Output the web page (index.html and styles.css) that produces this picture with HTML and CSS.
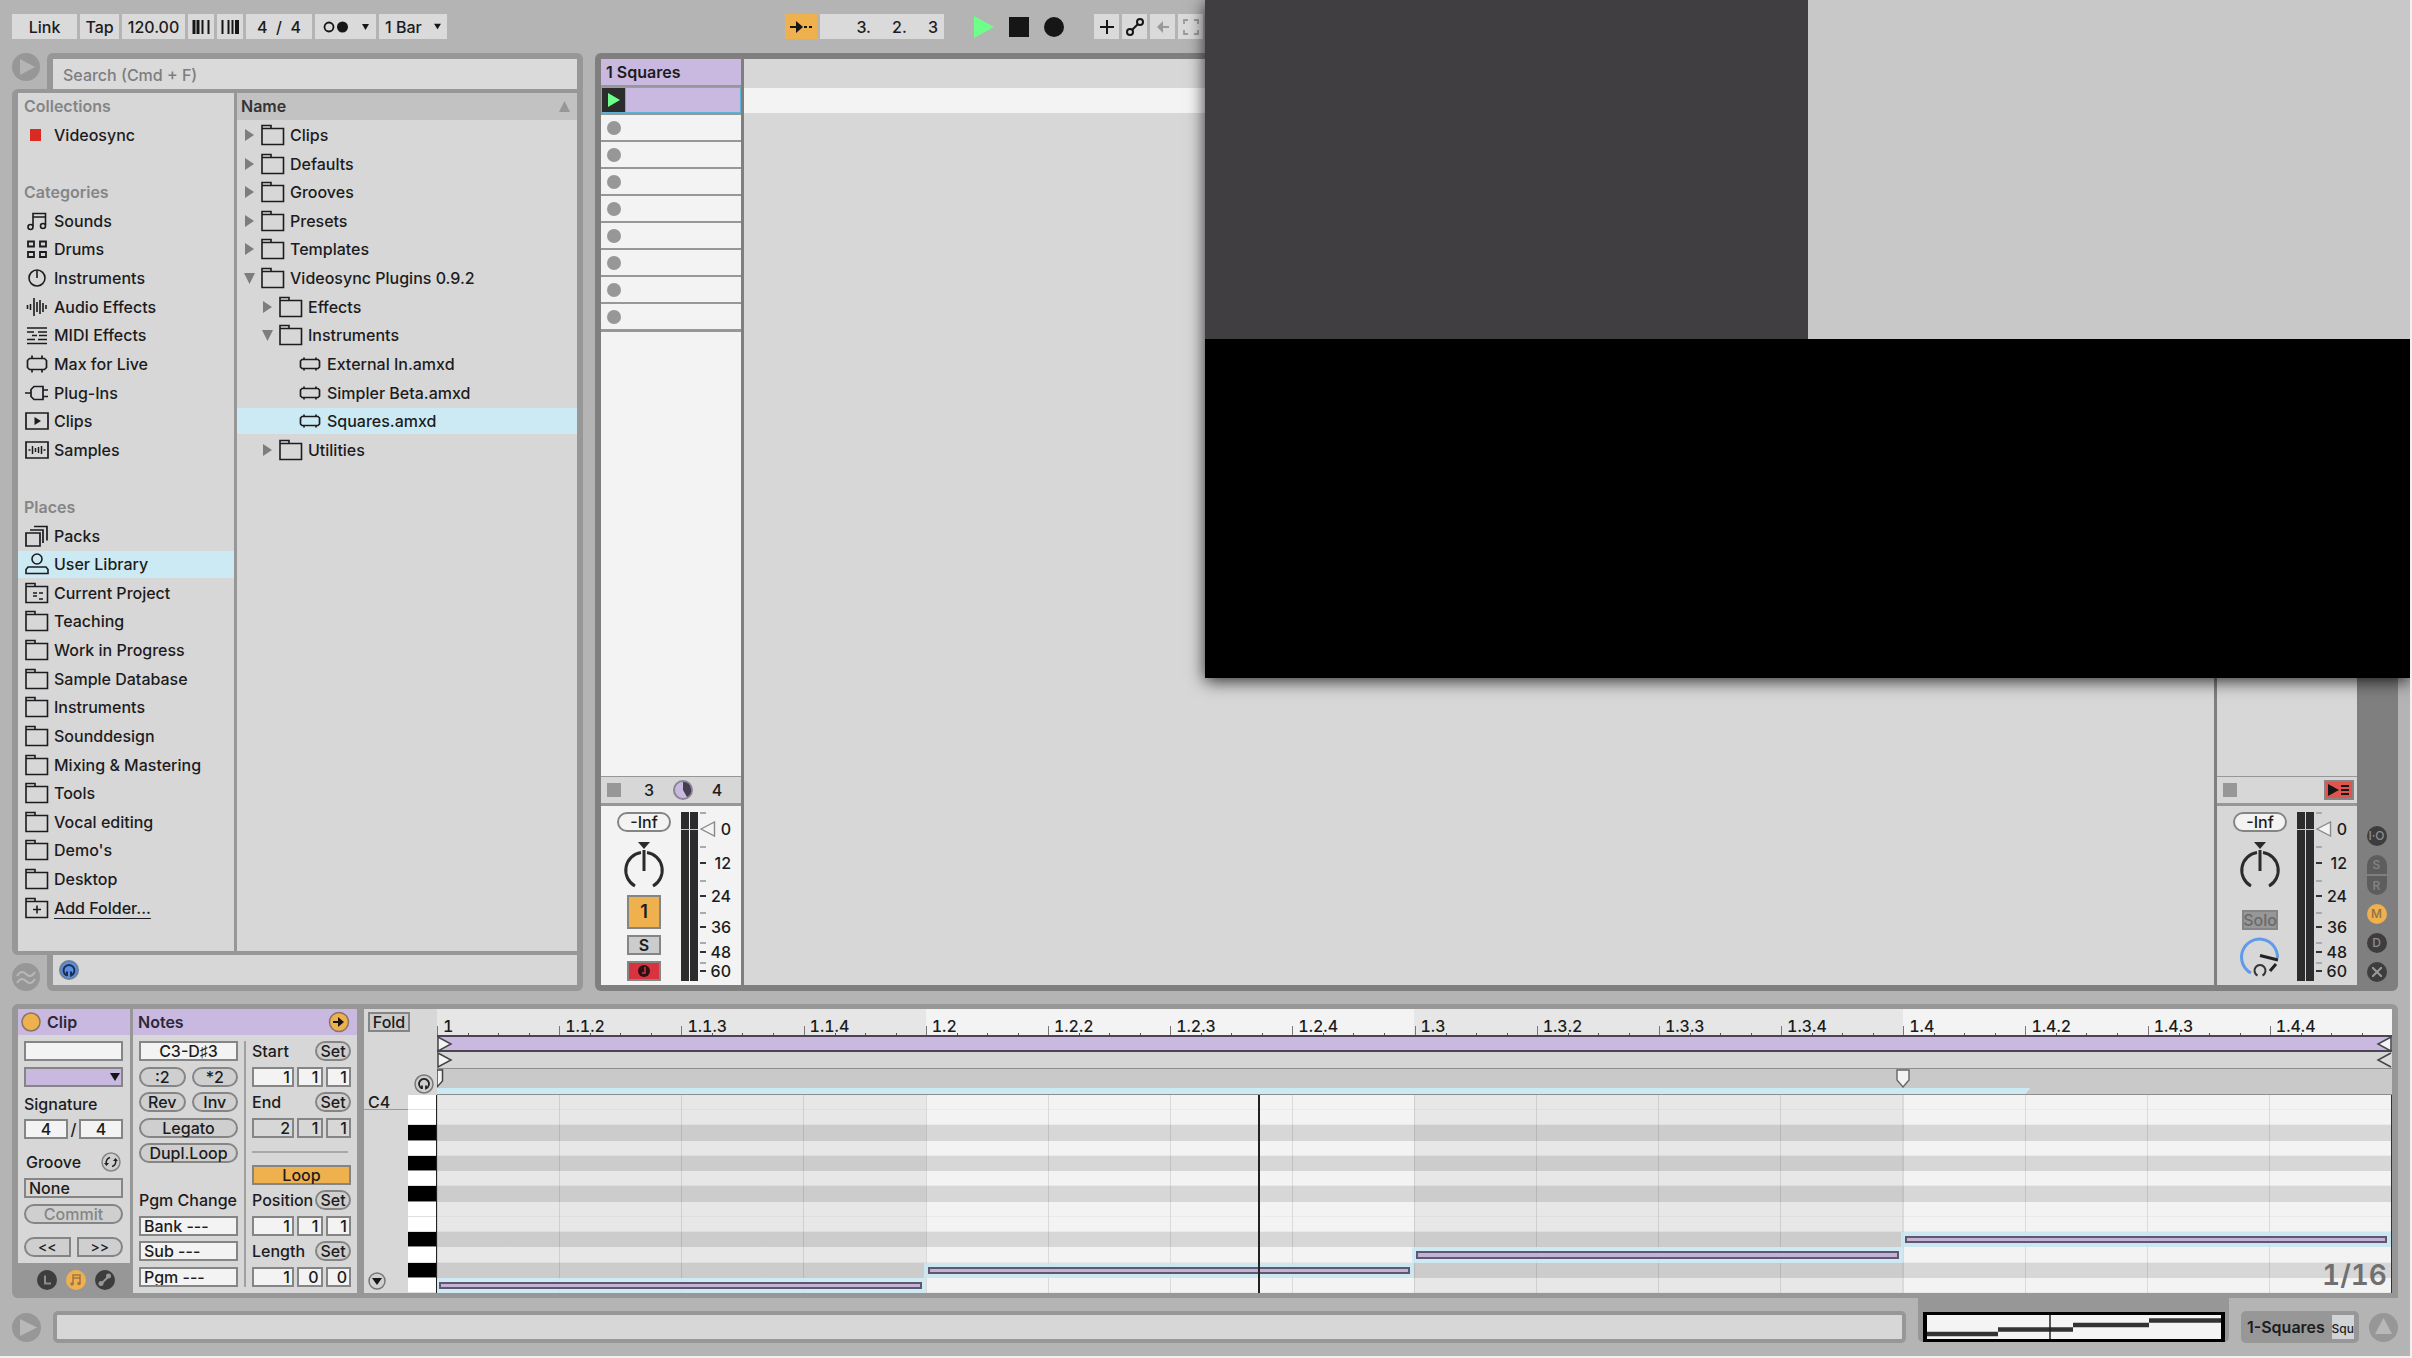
FILE: index.html
```html
<!DOCTYPE html>
<html lang="en">
<head>
<meta charset="utf-8">
<title>Live Set</title>
<link rel="stylesheet" href="styles.css">
</head>
<body>
<svg class="defs" aria-hidden="true">
  <symbol id="folder" viewBox="0 0 24 22"><path d="M1 20.5V1.5H10V4.5H22.5V20.5ZM1 4.5H10" fill="none" stroke="currentColor" stroke-width="1.6"/></symbol>
  <symbol id="project" viewBox="0 0 24 22"><path d="M1 20.5V1.5H10V4.5H22.5V20.5ZM1 4.5H10M8 11h4M8 14h4M14 11h4M14 17h4" fill="none" stroke="currentColor" stroke-width="1.6"/></symbol>
  <symbol id="add" viewBox="0 0 24 22"><path d="M1 20.5V1.5H10V4.5H22.5V20.5ZM1 4.5H10M8 12.5h8M12 8.500v8" fill="none" stroke="currentColor" stroke-width="1.6"/></symbol>
  <symbol id="notes" viewBox="0 0 24 22"><g fill="none" stroke="currentColor" stroke-width="1.6"><path d="M8 16V3.500h12.500V15M8 7h12.500"/><ellipse cx="5.500" cy="17" rx="2.500" ry="2.500"/><ellipse cx="18" cy="16" rx="2.500" ry="2.500"/></g></symbol>
  <symbol id="drums" viewBox="0 0 24 22"><path d="M3 3.500h6v5H3zM15 3.500h6v5h-6zM3 14h6v5H3zM15 14h6v5h-6z" fill="none" stroke="currentColor" stroke-width="1.800"/></symbol>
  <symbol id="instr" viewBox="0 0 24 22"><path d="M12 3.500V11" stroke="currentColor" stroke-width="1.600"/><circle cx="12" cy="11" r="8" fill="none" stroke="currentColor" stroke-width="1.600"/></symbol>
  <symbol id="wave" viewBox="0 0 24 22"><path d="M2.500 9v4M5.500 8v6M9 2v18M12 6v10M15 4v14M18 7v9M21 9v4" stroke="currentColor" stroke-width="1.600"/></symbol>
  <symbol id="midi" viewBox="0 0 24 22"><path d="M2 4h20M2 8h7M13 8h9M7 11.500h5M14 11.500h8M2 15.500h8M13 15.500h9M2 19.500h20" stroke="currentColor" stroke-width="1.600"/></symbol>
  <symbol id="max" viewBox="0 0 24 22"><path d="M4.500 5.500h15l2 2v7l-2 2h-15l-2-2v-7zM7 2.500v3M17 2.500v3M7 16.500v3M17 16.500v3" fill="none" stroke="currentColor" stroke-width="1.700"/></symbol>
  <symbol id="plug" viewBox="0 0 24 22"><path d="M0 11h6M18 4.500H9L6 7.500v7l3 3h9zM18 8h5M18 14.500h5" fill="none" stroke="currentColor" stroke-width="1.700"/></symbol>
  <symbol id="clips" viewBox="0 0 24 22"><path d="M1 3h22v16H1z" fill="none" stroke="currentColor" stroke-width="1.700"/><path d="M9.500 7v8l6.500-4z" fill="currentColor"/></symbol>
  <symbol id="samples" viewBox="0 0 24 22"><path d="M1 3h22v16H1z" fill="none" stroke="currentColor" stroke-width="1.700"/><path d="M3.500 11h2M7.500 7v8M10.500 9v4M13.500 8v6M16.500 7v8M18.500 11h2" stroke="currentColor" stroke-width="1.500"/></symbol>
  <symbol id="packs" viewBox="0 0 24 22"><path d="M1 8h14v13H1zM5 5h13v13M9 1.500h13v14" fill="none" stroke="currentColor" stroke-width="1.700"/></symbol>
  <symbol id="user" viewBox="0 0 24 22"><circle cx="12" cy="6" r="5" fill="none" stroke="currentColor" stroke-width="1.600"/><path d="M1 20.500v-4l2-2.500h18l2 2.500v4z" fill="none" stroke="currentColor" stroke-width="1.600"/></symbol>
  <symbol id="device" viewBox="0 0 24 22"><path d="M4 6.500h16l1.500 1.500v6L20 15.500H4L2.500 14V8zM6 4.500v2M18 4.500v2M6 15.500v2M18 15.500v2" fill="none" stroke="currentColor" stroke-width="1.700"/></symbol>
  <symbol id="right" viewBox="0 0 12 12"><path d="M1 0v12l9-6z" fill="#7d7d7d"/></symbol>
  <symbol id="down" viewBox="0 0 12 12"><path d="M0 1h11L5.500 12z" fill="#7d7d7d"/></symbol>
  <symbol id="pan" viewBox="0 0 44 48"><path d="M16 1h12l-6 7z" fill="#2b2b2b"/><path d="M13 45A18 18 0 0 1 19 11.500M31 45A18 18 0 0 0 25 11.500" fill="none" stroke="#2b2b2b" stroke-width="3"/><path d="M22 9V30" stroke="#2b2b2b" stroke-width="3"/></symbol>
  <symbol id="meter" viewBox="0 0 17 169"><path d="M0 0h8v169H0zM9 0h8v169H9z" fill="#2c2c2e"/><path d="M0 17.500h17" stroke="#c8c8c8"/></symbol>
  <symbol id="fader" viewBox="0 0 16 16"><path d="M1 8L14.500 1v14z" fill="#f4f4f4" stroke="#8a8a8a" stroke-width="1.400"/></symbol>
  <symbol id="caret" viewBox="0 0 10 10"><path d="M0 1h10L5 9z" fill="#161616"/></symbol>
</svg>

<header class="toolbar">
  <div class="tool-group tempo">
    <button class="tool w-link">Link</button>
    <button class="tool w-tap">Tap</button>
    <input class="tool w-bpm" aria-label="Tempo" value="120.00">
    <button class="tool w-nudge" aria-label="Nudge down"><svg width="18" height="16"><path d="M2 1v14M6 1v14" stroke="#161616" stroke-width="3"/><path d="M10.500 1v14" stroke="#161616" stroke-width="2"/><path d="M16.500 1v14" stroke="#161616" stroke-width="2"/></svg></button>
    <button class="tool w-nudge" aria-label="Nudge up"><svg width="18" height="16"><path d="M1.500 1v14" stroke="#161616" stroke-width="2"/><path d="M7.500 1v14" stroke="#161616" stroke-width="2"/><path d="M11.500 1v14" stroke="#161616" stroke-width="2"/><path d="M16 1v14" stroke="#161616" stroke-width="4"/></svg></button>
    <input class="tool w-sig" aria-label="Time signature" value="4  /  4">
    <button class="tool w-metro" aria-label="Metronome"><svg width="46" height="16"><circle cx="6" cy="8" r="4.500" fill="none" stroke="#161616" stroke-width="1.800"/><circle cx="19.500" cy="8" r="5.500" fill="#161616"/><path d="M39 5h7l-3.500 6z" fill="#161616"/></svg></button>
    <span class="chooser w-bar"><select class="tool" aria-label="Quantization"><option>1 Bar</option></select><svg width="7" height="7"><use href="#caret"/></svg></span>
  </div>
  <div class="tool-group">
    <button class="tool orange w-follow" aria-label="Follow"><svg width="24" height="16"><path d="M1 8h10M15 8h3M20 8h3" stroke="#161616" stroke-width="2"/><path d="M7 2v12l7-6z" fill="#161616"/></svg></button>
    <input class="tool w-pos" aria-label="Song position" value="3.     2.     3">
  </div>
  <div class="tool-group transport">
    <button class="bare" aria-label="Play"><svg width="20" height="22"><path d="M0 0v22l20-11z" fill="#6eff8b"/></svg></button>
    <button class="bare" aria-label="Stop"><svg width="20" height="20"><path d="M0 0h20v20H0z" fill="#161616"/></svg></button>
    <button class="bare" aria-label="Record"><svg width="20" height="20"><circle cx="10" cy="10" r="10" fill="#161616"/></svg></button>
  </div>
  <div class="tool-group">
    <button class="tool w-small" aria-label="Overdub"><svg width="16" height="16"><path d="M8 1v14M1 8h14" stroke="#161616" stroke-width="2"/></svg></button>
    <button class="tool w-small" aria-label="Automation"><svg width="18" height="18"><g fill="none" stroke="#161616" stroke-width="2"><circle cx="4" cy="14" r="3"/><circle cx="14" cy="4" r="3"/><path d="M6 12l6-6"/></g></svg></button>
    <button class="tool w-small" aria-label="Re-enable automation"><svg width="14" height="14"><path d="M5 7h8" stroke="#9a9a9a" stroke-width="2"/><path d="M7 1v12L1 7z" fill="#9a9a9a"/></svg></button>
    <button class="tool w-small" aria-label="Capture"><svg width="16" height="16"><path d="M1 5V1h4M11 1h4v4M15 11v4h-4M5 15H1v-4" fill="none" stroke="#9a9a9a" stroke-width="1.800"/></svg></button>
  </div>
</header>

<main class="upper">
  <section class="browser">
    <div class="browser-top">
      <button class="round" aria-label="Hide browser"><svg width="28" height="28"><circle cx="14" cy="14" r="14" fill="#979798"/><path d="M8 6v16l15-8z" fill="#b4b4b4"/></svg></button>
      <div class="search"><input aria-label="Search" placeholder="Search (Cmd + F)"></div>
    </div>
    <div class="browser-body">
      <nav class="sidebar">
        <h2>Collections</h2>
        <a href="#"><svg class="ico" viewBox="0 0 24 22"><path d="M5 5h11v12H5z" fill="#da2a24"/></svg>Videosync</a>
        <span></span>
        <h2>Categories</h2>
        <a href="#"><svg class="ico"><use href="#notes"/></svg>Sounds</a>
        <a href="#"><svg class="ico"><use href="#drums"/></svg>Drums</a>
        <a href="#"><svg class="ico"><use href="#instr"/></svg>Instruments</a>
        <a href="#"><svg class="ico"><use href="#wave"/></svg>Audio Effects</a>
        <a href="#"><svg class="ico"><use href="#midi"/></svg>MIDI Effects</a>
        <a href="#"><svg class="ico"><use href="#max"/></svg>Max for Live</a>
        <a href="#"><svg class="ico"><use href="#plug"/></svg>Plug-Ins</a>
        <a href="#"><svg class="ico"><use href="#clips"/></svg>Clips</a>
        <a href="#"><svg class="ico"><use href="#samples"/></svg>Samples</a>
        <span></span>
        <h2>Places</h2>
        <a href="#"><svg class="ico"><use href="#packs"/></svg>Packs</a>
        <a href="#" class="selected"><svg class="ico"><use href="#user"/></svg>User Library</a>
        <a href="#"><svg class="ico"><use href="#project"/></svg>Current Project</a>
        <a href="#"><svg class="ico"><use href="#folder"/></svg>Teaching</a>
        <a href="#"><svg class="ico"><use href="#folder"/></svg>Work in Progress</a>
        <a href="#"><svg class="ico"><use href="#folder"/></svg>Sample Database</a>
        <a href="#"><svg class="ico"><use href="#folder"/></svg>Instruments</a>
        <a href="#"><svg class="ico"><use href="#folder"/></svg>Sounddesign</a>
        <a href="#"><svg class="ico"><use href="#folder"/></svg>Mixing &amp; Mastering</a>
        <a href="#"><svg class="ico"><use href="#folder"/></svg>Tools</a>
        <a href="#"><svg class="ico"><use href="#folder"/></svg>Vocal editing</a>
        <a href="#"><svg class="ico"><use href="#folder"/></svg>Demo's</a>
        <a href="#"><svg class="ico"><use href="#folder"/></svg>Desktop</a>
        <a href="#" class="add"><svg class="ico"><use href="#add"/></svg><span>Add Folder...</span></a>
      </nav>
      <div class="files">
        <div class="files-head">Name<svg width="11" height="11"><path d="M0 11h11L5.500 0z" fill="#979798"/></svg></div>
        <a href="#"><svg class="tri"><use href="#right"/></svg><svg class="ico"><use href="#folder"/></svg>Clips</a>
        <a href="#"><svg class="tri"><use href="#right"/></svg><svg class="ico"><use href="#folder"/></svg>Defaults</a>
        <a href="#"><svg class="tri"><use href="#right"/></svg><svg class="ico"><use href="#folder"/></svg>Grooves</a>
        <a href="#"><svg class="tri"><use href="#right"/></svg><svg class="ico"><use href="#folder"/></svg>Presets</a>
        <a href="#"><svg class="tri"><use href="#right"/></svg><svg class="ico"><use href="#folder"/></svg>Templates</a>
        <a href="#"><svg class="tri"><use href="#down"/></svg><svg class="ico"><use href="#folder"/></svg>Videosync Plugins 0.9.2</a>
        <a href="#" class="l2"><svg class="tri"><use href="#right"/></svg><svg class="ico"><use href="#folder"/></svg>Effects</a>
        <a href="#" class="l2"><svg class="tri"><use href="#down"/></svg><svg class="ico"><use href="#folder"/></svg>Instruments</a>
        <a href="#" class="l3"><svg class="ico"><use href="#device"/></svg>External In.amxd</a>
        <a href="#" class="l3"><svg class="ico"><use href="#device"/></svg>Simpler Beta.amxd</a>
        <a href="#" class="l3 selected"><svg class="ico"><use href="#device"/></svg>Squares.amxd</a>
        <a href="#" class="l2"><svg class="tri"><use href="#right"/></svg><svg class="ico"><use href="#folder"/></svg>Utilities</a>
      </div>
    </div>
    <div class="browser-bottom">
      <button class="round" aria-label="Groove pool"><svg width="28" height="28"><circle cx="14" cy="14" r="14" fill="#979798"/><path d="M5 13c3-5 6-5 9-2s6 3 9-2M5 20c3-5 6-5 9-2s6 3 9-2" fill="none" stroke="#b8b8b8" stroke-width="2"/></svg></button>
      <div class="preview"><button class="bare" aria-label="Preview"><svg width="20" height="20"><circle cx="10" cy="10" r="9" fill="#5a8fe0" stroke="#6f7f98" stroke-width="2"/><path d="M8 16V11.500M8 15.500A5.500 5.500 0 1 1 12 15.500V11.500" fill="none" stroke="#1d2f55" stroke-width="2"/></svg></button></div>
    </div>
  </section>

  <section class="session">
    <div class="track">
      <h2 class="track-name">1 Squares</h2>
      <div class="slots">
        <div class="slot playing"><button aria-label="Launch clip"><svg width="12" height="14"><path d="M0 0v14l12-7z" fill="#6eff8b"/></svg></button></div>
        <div class="slot"><i></i></div><div class="slot"><i></i></div><div class="slot"><i></i></div><div class="slot"><i></i></div>
        <div class="slot"><i></i></div><div class="slot"><i></i></div><div class="slot"><i></i></div><div class="slot"><i></i></div>
      </div>
      <div class="drop"></div>
      <div class="stop-row"><button class="stop" aria-label="Stop clip"></button><span>3</span><svg width="20" height="20"><circle cx="10" cy="10" r="9" fill="#c9b8e0" stroke="#8a8592" stroke-width="2"/><path d="M10 10V2A8 8 0 0 1 14 17z" fill="#453e50"/></svg><span>4</span></div>
      <div class="mixer">
        <div class="strip">
          <button class="pill">-Inf</button>
          <svg width="44" height="48"><use href="#pan"/></svg>
          <button class="box activator">1</button>
          <button class="box solo">S</button>
          <button class="box arm" aria-label="Arm"><svg width="12" height="12"><circle cx="6" cy="6" r="6" fill="#2c1215"/><path d="M7 2v6H4" fill="none" stroke="#da3340" stroke-width="1.500"/></svg></button>
        </div>
        <svg width="17" height="169"><use href="#meter"/></svg>
        <ul class="scale"><li><svg width="16" height="16"><use href="#fader"/></svg>0</li><li>12</li><li>24</li><li>36</li><li>48</li><li>60</li></ul>
      </div>
    </div>
    <div class="empty"><div class="scene"></div></div>
    <div class="track master">
      <div class="drop"></div>
      <div class="stop-row"><button class="stop" aria-label="Stop all clips"></button><button class="back" aria-label="Back to arrangement"><svg width="22" height="14"><path d="M0 1v12l11-6z" fill="#161616"/><path d="M13 3h8M13 7h8M13 11h8" stroke="#161616" stroke-width="2"/></svg></button></div>
      <div class="mixer">
        <div class="strip">
          <button class="pill">-Inf</button>
          <svg width="44" height="48"><use href="#pan"/></svg>
          <button class="box cue-solo">Solo</button>
          <svg class="cue" width="44" height="44"><path d="M13 38A18 18 0 1 1 39.500 23" fill="none" stroke="#5f9bea" stroke-width="3"/><path d="M22 20.500l18 4.500M38 29l-6 7" stroke="#222" stroke-width="3"/><path d="M19 40h-2M19.500 40.500A5.500 5.500 0 1 1 24.500 40.500M25 40h2" fill="none" stroke="#333" stroke-width="2"/></svg>
        </div>
        <svg width="17" height="169"><use href="#meter"/></svg>
        <ul class="scale"><li><svg width="16" height="16"><use href="#fader"/></svg>0</li><li>12</li><li>24</li><li>36</li><li>48</li><li>60</li></ul>
      </div>
    </div>
    <div class="rail">
      <button>I·O</button>
      <div class="pair"><button class="dim top">S</button><button class="dim bottom">R</button></div>
      <button class="on">M</button>
      <button>D</button>
      <button aria-label="Crossfader"><svg width="10" height="10"><path d="M0 0l10 10M10 0L0 10" stroke="#9a9a9a" stroke-width="2"/></svg></button>
    </div>
  </section>
</main>

<section class="detail">
  <div class="clip-col">
    <div class="clip-box">
      <h2 class="bar"><svg width="20" height="20"><circle cx="10" cy="10" r="9" fill="#efb04e" stroke="#857663" stroke-width="1.500"/></svg>Clip</h2>
      <div class="clip-body">
        <input class="field" aria-label="Clip name">
        <span class="chooser color"><select class="field" aria-label="Clip color"><option></option></select><svg width="10" height="10"><use href="#caret"/></svg></span>
        <label class="sig-label" for="sig">Signature</label>
        <div class="sig"><input id="sig" class="field mid" value="4">/<input class="field mid" aria-label="Denominator" value="4"></div>
        <div class="groove"><label for="groove">Groove</label><button class="bare" aria-label="Hot-swap groove"><svg width="20" height="20"><circle cx="10" cy="10" r="9" fill="#cfcfcf" stroke="#858585" stroke-width="1.500"/><path d="M5.500 12A5 5 0 0 1 9 5.500M14.500 8A5 5 0 0 1 11 14.500" fill="none" stroke="#222" stroke-width="1.500"/><path d="M3 11h5l-2.500 3zM12 9h5l-2.500-3z" fill="#222"/></svg></button></div>
        <select id="groove" class="field plain"><option>None</option></select>
        <button class="pill commit">Commit</button>
        <div class="nudge"><button class="pill left">&lt;&lt;</button><button class="pill right">&gt;&gt;</button></div>
      </div>
    </div>
    <div class="clip-tabs">
      <button class="bare" aria-label="Launch box"><svg width="20" height="20"><circle cx="10" cy="10" r="10" fill="#3d3d3d"/><path d="M8 5.500v8h6" fill="none" stroke="#8d8d8d" stroke-width="2"/></svg></button>
      <button class="bare" aria-label="Notes box"><svg width="20" height="20"><circle cx="10" cy="10" r="10" fill="#efb04e"/><path d="M7 14V5h7v8M7 8h7" fill="none" stroke="#a0764a" stroke-width="1.500"/><circle cx="6" cy="14" r="1.800" fill="#a0764a"/><circle cx="13" cy="13.500" r="1.800" fill="#a0764a"/></svg></button>
      <button class="bare" aria-label="Envelopes box"><svg width="20" height="20"><circle cx="10" cy="10" r="10" fill="#3d3d3d"/><path d="M6 14l8-8" stroke="#979798" stroke-width="2"/><circle cx="6" cy="13.500" r="2.500" fill="#979798"/><circle cx="13.500" cy="6" r="2.500" fill="#979798"/></svg></button>
    </div>
  </div>

  <div class="notes-box">
    <h2 class="bar">Notes<button class="bare" aria-label="Expand"><svg width="22" height="22"><circle cx="11" cy="11" r="9.500" fill="#efb04e" stroke="#857663" stroke-width="1.500"/><path d="M5 11h7" stroke="#161616" stroke-width="2"/><path d="M10 6v10l6-5z" fill="#161616"/></svg></button></h2>
    <div class="notes-body">
      <div class="notes-left">
        <div class="rows five">
          <input class="field mid" aria-label="Note range" value="C3-D♯3">
          <div class="two"><button class="pill">:2</button><button class="pill">*2</button></div>
          <div class="two"><button class="pill">Rev</button><button class="pill">Inv</button></div>
          <button class="pill">Legato</button>
          <button class="pill">Dupl.Loop</button>
        </div>
        <div class="rows four">
          <span>Pgm Change</span>
          <input class="field" aria-label="Bank" value="Bank ---">
          <input class="field" aria-label="Sub" value="Sub ---">
          <input class="field" aria-label="Program" value="Pgm ---">
        </div>
      </div>
      <div class="notes-right">
        <div class="rows four">
          <div class="set">Start<button class="pill">Set</button></div>
          <div class="nums"><input class="field" aria-label="Start bar" value="1"><input class="field" aria-label="Start beat" value="1"><input class="field" aria-label="Start sixteenth" value="1"></div>
          <div class="set">End<button class="pill">Set</button></div>
          <div class="nums off"><input class="field" aria-label="End bar" value="2"><input class="field" aria-label="End beat" value="1"><input class="field" aria-label="End sixteenth" value="1"></div>
        </div>
        <hr>
        <button class="box loop">Loop</button>
        <div class="rows four">
          <div class="set">Position<button class="pill">Set</button></div>
          <div class="nums"><input class="field" aria-label="Position bar" value="1"><input class="field" aria-label="Position beat" value="1"><input class="field" aria-label="Position sixteenth" value="1"></div>
          <div class="set">Length<button class="pill">Set</button></div>
          <div class="nums"><input class="field" aria-label="Length bars" value="1"><input class="field" aria-label="Length beats" value="0"><input class="field" aria-label="Length sixteenths" value="0"></div>
        </div>
      </div>
    </div>
  </div>

  <div class="editor">
    <div class="corner"><button class="box fold">Fold</button><button class="bare" aria-label="Preview notes"><svg width="20" height="20"><circle cx="10" cy="10" r="9" fill="#cfcfcf" stroke="#777" stroke-width="1.500"/><path d="M8 15V11.500M8 14.500A5 5 0 1 1 12 14.500V11.500" fill="none" stroke="#222" stroke-width="1.800"/></svg></button></div>
    <div class="head">
      <div class="ruler">
        <span>1</span><span>1.1.2</span><span>1.1.3</span><span>1.1.4</span><span>1.2</span><span>1.2.2</span><span>1.2.3</span><span>1.2.4</span><span>1.3</span><span>1.3.2</span><span>1.3.3</span><span>1.3.4</span><span>1.4</span><span>1.4.2</span><span>1.4.3</span><span>1.4.4</span>
      </div>
      <div class="loopbar"><svg width="16" height="16"><path d="M1 1l13 7L1 15z" fill="#f4f4f4" stroke="#444" stroke-width="1.500"/></svg><svg width="16" height="16"><path d="M15 1L2 8l13 7z" fill="#f4f4f4" stroke="#444" stroke-width="1.500"/></svg></div>
      <div class="markers"><svg width="16" height="16"><path d="M1 1l13 7L1 15z" fill="#f4f4f4" stroke="#444" stroke-width="1.500"/></svg><svg width="16" height="16"><path d="M15 1L2 8l13 7" fill="#dcdcdc" stroke="#444" stroke-width="1.500"/></svg></div>
      <div class="scrub">
        <svg class="flag" width="7" height="20"><path d="M0 1h5.500v11L0 18z" fill="#f4f4f4" stroke="#444" stroke-width="1.500"/></svg>
        <div class="region"></div>
        <svg class="pin" width="14" height="19"><path d="M1 1h12v10l-6 7-6-7z" fill="#f4f4f4" stroke="#666" stroke-width="1.400"/></svg>
      </div>
    </div>
    <div class="octave"><span>C4</span><button class="bare" aria-label="Scroll"><svg width="18" height="18"><circle cx="9" cy="9" r="8" fill="#d0d0d0" stroke="#777" stroke-width="1.500"/><path d="M4 6h10l-5 7z" fill="#161616"/></svg></button></div>
    <div class="keys"><b></b><b></b><b class="black"></b><b></b><b class="black"></b><b></b><b class="black"></b><b></b><b></b><b class="black"></b><b></b><b class="black"></b><b></b></div>
    <div class="roll">
      <b></b><b></b><b class="black"></b><b></b><b class="black"></b><b></b><b class="black"></b><b></b><b></b><b class="black"></b><b></b><b class="black"></b><b></b>
      <div class="beats"><div class="note n1"></div><div class="note n2"></div><div class="note n3"></div><div class="note n4"></div></div>
      <div class="playhead"></div>
      <span class="grid-size">1/16</span>
    </div>
  </div>
</section>

<footer class="status">
  <button class="bare" aria-label="Show info"><svg width="29" height="29"><circle cx="14.500" cy="14.500" r="14.500" fill="#979798"/><path d="M8 6v17l17-8.500z" fill="#b8b8b8"/></svg></button>
  <div class="message"></div>
  <div class="overview"><svg viewBox="0 0 302 30" preserveAspectRatio="none"><path d="M0 0h302v30H0z" fill="#000"/><path d="M4 3h294v24H4z" fill="#f4f4f4"/><path d="M4 22h71M75 17.500h75M150 13h76M226 8.500h72" stroke="#333" stroke-width="4.500"/><path d="M127 3v24" stroke="#222" stroke-width="1.500"/></svg></div>
  <div class="current">1-Squares<span>Squ</span></div>
  <button class="bare" aria-label="Hide detail view"><svg width="29" height="29"><circle cx="14.500" cy="14.500" r="14.500" fill="#979798"/><path d="M6 21h17L14.500 5z" fill="#b8b8b8"/></svg></button>
</footer>

<div class="video"><div class="dark"></div><div class="light"></div><div class="black-half"></div></div>
</body>
</html>
```
FILE: styles.css
```css
:root {
  --bg: #b4b4b4;
  --panel: #d7d7d7;
  --frame: #979798;
  --dark: #7f7f7f;
  --pale: #f3f3f3;
  --line: #858585;
  --purple: #c9b8e0;
  --orange: #efb04e;
  --cyan: #cbeaf4;
  --ink: #1c1c20;
}
* { box-sizing: border-box; }
body {
  margin: 0;
  min-height: 100vh;
  display: flex;
  flex-direction: column;
  position: relative;
  background: var(--bg);
  border-right: 2px solid #f0f0f0;
  border-bottom: 2px solid #f0f0f0;
  color: var(--ink);
  font: 500 16px/20px Inter, "Liberation Sans", sans-serif;
}
.defs { position: absolute; width: 0; height: 0; }
button, input, select { font: inherit; color: inherit; padding: 0; margin: 0; border: 0; border-radius: 0; background: none; }
select { appearance: none; }
button { display: flex; align-items: center; justify-content: center; }
svg { display: block; flex: none; }
h2, ul { margin: 0; padding: 0; font-size: 16px; font-weight: 600; list-style: none; }
a { color: inherit; text-decoration: none; }

/* Control bar */
.toolbar { display: flex; align-items: center; padding: 14px 12px; height: 53px; }
.tool-group { display: flex; gap: 3px; }
.tempo { width: 773px; }
.tool { height: 25px; background: #dadada; text-align: center; }
.w-link { width: 65px; }
.w-tap { width: 39px; }
.w-bpm { width: 63px; }
.w-nudge { width: 26px; }
.w-sig { width: 66px; white-space: pre; }
.w-metro { width: 61px; }
.w-bar { width: 68px; }
.w-bar .tool { text-align: left; padding-left: 6px; }
.w-follow { width: 32px; }
.w-pos { width: 124px; text-align: right; padding-right: 6px; }
.w-small { width: 25px; }
.tool.orange { background: var(--orange); }
.transport { gap: 15px; align-items: center; padding: 0 30px; }
.chooser { display: grid; align-items: center; }
.chooser > * { grid-area: 1 / 1; }
.chooser svg { justify-self: end; margin-right: 6px; pointer-events: none; }

.upper { flex: 1; display: flex; gap: 12px; padding-left: 12px; padding-right: 12px; min-height: 0; }

/* Browser */
.browser { width: 571px; display: flex; flex-direction: column; }
.browser-top, .browser-bottom { display: flex; height: 36px; }
.round { width: 35px; justify-content: flex-start; align-items: flex-start; }
.browser-bottom .round { align-items: flex-end; }
.search, .preview { flex: 1; background: var(--frame); padding: 6px 6px 0; border-radius: 6px 6px 0 0; }
.search input { width: 100%; height: 31px; background: #dadada; padding-left: 10px; }
.search input::placeholder { color: #7d7d7f; opacity: 1; }
.preview { padding: 0 6px 6px; border-radius: 0 0 6px 6px; }
.preview button { width: 100%; height: 30px; background: var(--panel); justify-content: flex-start; padding-left: 6px; }
.browser-body { flex: 1; display: grid; grid-template-columns: 216px 1fr; gap: 3px; background: var(--frame); padding: 4px 6px; border-radius: 6px 0 0 6px; }
.sidebar, .files { display: grid; grid-template-rows: repeat(29, 1fr); row-gap: 2px; background: var(--panel); padding-bottom: 30px; }
.sidebar h2 { padding-left: 6px; color: #858587; align-self: center; }
.sidebar a, .files a { display: flex; align-items: center; gap: 5px; padding-left: 7px; white-space: nowrap; }
.ico { width: 24px; height: 22px; }
.tri { width: 12px; height: 12px; }
.selected { background: var(--cyan); }
.add span { text-decoration: underline; text-underline-offset: 4px; }
.files-head { display: flex; align-items: center; justify-content: space-between; padding: 0 7px 0 4px; background: #c2c2c2; font-weight: 600; color: #333336; }
.files .l2 { padding-left: 25px; }
.files .l3 { padding-left: 61px; }

/* Session view */
.session { flex: 1; display: grid; grid-template-columns: 140px 1fr 140px 35px; gap: 0 3px; background: var(--dark); border-radius: 6px; padding: 6px 3px 6px 6px; }
.track { display: flex; flex-direction: column; background: var(--frame); }
.track-name { height: 26px; padding: 3px 5px; background: var(--purple); }
.slots { display: grid; grid-template-rows: 26px repeat(8, 25px); gap: 2px; padding-top: 2px; }
.slot { background: var(--pale); display: flex; align-items: center; padding-left: 6px; }
.slot i { width: 14px; height: 14px; border-radius: 50%; background: #979798; }
.slot.playing { background: var(--purple); border: 1px solid #5bb4d6; padding: 0; }
.slot.playing button { width: 24px; height: 100%; background: #2c2c2c; border-right: 1px solid #5bb4d6; }
.drop { flex: 1; margin-top: 3px; background: var(--pale); }
.stop-row { height: 26px; margin: 1px 0 3px; background: var(--panel); display: grid; grid-template-columns: 28px 40px 28px 40px; align-items: center; text-align: center; }
.stop { width: 14px; height: 14px; margin-left: 6px; background: #979798; }
.stop-row svg { justify-self: center; }
.mixer { height: 179px; background: var(--pale); display: flex; padding: 6px 10px 0 16px; }
.strip { width: 54px; margin-right: 10px; display: flex; flex-direction: column; align-items: center; }
.pill { height: 20px; border: 2px solid var(--line); border-radius: 10px; background: #cfcfcf; line-height: 16px; }
.strip .pill { width: 54px; margin-bottom: 9px; background: var(--pale); }
.box { border: 2px solid var(--line); background: #cccccc; line-height: 16px; }
.strip .box { width: 34px; height: 20px; margin-top: 6px; font-weight: 600; }
.strip .activator { height: 34px; background: var(--orange); font-size: 18px; }
.strip .arm { background: #da3340; }
.scale { flex: 1; margin-left: 2px; display: grid; grid-template-rows: 34px 34px 32px 30px 20px 18px; font-weight: 500; }
.scale li { display: flex; align-items: center; justify-content: flex-end; background: linear-gradient(#aaa 0 0) 0 0 / 6px 2px no-repeat, linear-gradient(#333 0 0) 0 50% / 6px 2px no-repeat; }
.scale li:first-child { justify-content: space-between; background: linear-gradient(#aaa 0 0) 0 0 / 6px 2px no-repeat; }
.empty { background: var(--panel); padding-top: 29px; }
.scene { height: 25px; background: var(--pale); }
.master .drop, .master .mixer { background: var(--panel); }
.master .stop-row { display: flex; justify-content: space-between; padding-right: 3px; }
.back { width: 30px; height: 20px; background: #e0544d; border: 2px solid var(--line); }
.strip .cue-solo { width: 36px; margin-top: 21px; margin-bottom: 5px; background: #979798; color: #6a6a6a; font-weight: 500; }
.rail { display: flex; flex-direction: column; align-items: center; justify-content: flex-end; gap: 9px; padding: 0 2px 3px 0; }
.rail button { width: 20px; height: 20px; border-radius: 10px; background: #3d3d3d; color: #8d8d8d; font-size: 12px; }
.pair { display: grid; gap: 2px; }
.rail .dim { height: 19px; background: #5d5d5d; color: #858585; }
.rail .top { border-radius: 10px 10px 0 0; }
.rail .bottom { border-radius: 0 0 10px 10px; }
.rail .on { background: var(--orange); color: #8d7045; }

/* Clip detail */
.detail { margin: 13px 12px 0; height: 294px; display: grid; grid-template-columns: 112px 224px 1fr; grid-template-rows: 284px; column-gap: 3px; padding: 5px 6px; background: var(--frame); border-radius: 6px 6px 0 6px; }
.clip-col { display: flex; flex-direction: column; }
.clip-box { height: 254px; background: var(--panel); }
.bar { height: 26px; display: flex; align-items: center; gap: 6px; padding: 0 7px 0 5px; background: var(--purple); color: #2d2838; }
.clip-box .bar { padding-left: 3px; }
.notes-box .bar { justify-content: space-between; }
.clip-body { display: flex; flex-direction: column; gap: 6px; padding: 6px 7px 0 6px; }
.field { width: 100%; min-width: 0; height: 20px; border: 2px solid var(--line); background: var(--pale); padding-left: 3px; line-height: 16px; }
.mid { text-align: center; padding: 0; }
.color .field { background: var(--purple); }
.color svg { margin-right: 3px; }
.sig-label { margin-top: 2px; line-height: 18px; }
.sig { display: grid; grid-template-columns: 44px 11px 44px; text-align: center; }
.groove { display: flex; justify-content: space-between; align-items: center; height: 20px; margin: 7px 2px 0; }
.plain { background: var(--panel); }
.commit { color: #858585; }
.nudge { display: flex; gap: 6px; margin-top: 7px; font-size: 14px; }
.nudge .pill { flex: 1; }
.nudge .left { border-radius: 10px 0 0 10px; }
.nudge .right { border-radius: 0 10px 10px 0; }
.clip-tabs { flex: 1; display: flex; align-items: center; justify-content: center; gap: 9px; padding: 4px 0 0 4px; }
.notes-box { background: var(--panel); }
.notes-body { display: grid; grid-template-columns: 107px 1fr; height: 258px; padding: 6px 6px 7px; }
.notes-left { display: flex; flex-direction: column; justify-content: space-between; padding-right: 6px; border-right: 2px solid #a0a0a0; }
.notes-right { padding-left: 6px; }
.rows { display: flex; flex-direction: column; justify-content: space-between; }
.five { height: 122px; }
.four { height: 97px; }
.two { display: grid; grid-template-columns: 1fr 1fr; gap: 6px; }
.set { display: flex; justify-content: space-between; line-height: 20px; }
.set .pill { width: 36px; }
.nums { display: grid; grid-template-columns: 42px 1fr 1fr; gap: 3px; }
.nums .field { text-align: right; padding-right: 2px; }
.nums.off .field { background: var(--panel); }
hr { margin: 13px 3px 12px 0; border: 0; height: 2px; background: #a8a8a8; }
.loop { width: 100%; height: 20px; margin-bottom: 5px; background: var(--orange); }

/* Note editor */
.editor { margin-left: 4px; display: grid; grid-template-columns: 44px 29px 1fr; grid-template-rows: 86px 198px; background: var(--panel); }
.corner { grid-column: 1 / 3; display: flex; justify-content: space-between; padding: 3px 3px 1px 4px; }
.corner .bare { align-self: flex-end; }
.fold { width: 42px; height: 20px; }
.head { display: grid; grid-template-rows: 26px 17px 17px 26px; }
.ruler { display: grid; grid-template-columns: repeat(16, 1fr); align-items: end; font-variant-numeric: tabular-nums; background: repeating-linear-gradient(90deg, #e6e6e6 0 25%, var(--pale) 25% 50%); }
.ruler span { height: 20px; padding-left: 6px; line-height: 22px; background: linear-gradient(#777 0 0) 0 100% / 1px 9px no-repeat, linear-gradient(#555 0 0) 31px 100% / 1px 2px no-repeat, linear-gradient(#555 0 0) 61px 100% / 1px 2px no-repeat, linear-gradient(#555 0 0) 92px 100% / 1px 2px no-repeat; }
.loopbar, .markers { display: flex; justify-content: space-between; align-items: center; }
.loopbar { background: var(--purple); border-top: 2px solid #4c4453; border-bottom: 2px solid #4c4453; overflow: hidden; }
.markers { border-bottom: 1px solid #8d8d8d; background: #d5d5d5; }
.scrub { position: relative; display: flex; flex-direction: column; justify-content: flex-end; background: #c9c9c9; border-bottom: 1px solid #8d8d8d; }
.flag { position: absolute; left: 0; top: 0; }
.pin { position: absolute; left: 75%; top: 0; margin-left: -7px; }
.region { width: 81.500%; height: 6px; background: var(--cyan); clip-path: polygon(0 0, 100% 0, calc(100% - 5px) 100%, 0 100%); }
.octave { display: flex; flex-direction: column; justify-content: space-between; align-items: flex-start; padding: 0 0 3px 4px; background: linear-gradient(#999 0 0) 0 14px / 100% 1px no-repeat; }
.octave span { line-height: 14px; }
.keys, .roll { display: grid; grid-template-rows: repeat(13, 1fr); }
.keys { background: #fff; border-right: 1px solid #222; }
.keys b { border-bottom: 1px solid #e0e0e0; }
.keys .black { background: #000; border-color: #888; }
.roll { position: relative; overflow: hidden; background: var(--pale); border-right: 1px solid #333; }
.roll b { border-bottom: 1px solid #eaeaea; }
.roll b.black { background: #d7d7d7; border-color: #d7d7d7; }
.beats { position: absolute; inset: 0; display: grid; grid-template: repeat(13, 1fr) / repeat(4, 1fr); background: repeating-linear-gradient(90deg, rgba(0, 0, 0, 0.05) 0 25%, transparent 25% 50%), repeating-linear-gradient(90deg, rgba(0, 0, 0, 0.1) 0 1px, transparent 1px 6.250%); }
.note { background: #c3b2d6; border: 2px solid #5f5670; margin: 4px 4px 4px 2px; outline: 4px solid rgba(203, 234, 244, 0.85); }
.n1 { grid-area: 13 / 1; }
.n2 { grid-area: 12 / 2; }
.n3 { grid-area: 11 / 3; }
.n4 { grid-area: 10 / 4; }
.playhead { position: absolute; top: 0; bottom: 0; left: 42%; width: 2px; background: #222; }
.grid-size { position: absolute; right: 4px; bottom: 2px; font-size: 28px; line-height: 32px; font-weight: 600; font-variant-numeric: tabular-nums; color: #707070; }

/* Status bar */
.status { height: 58px; display: flex; align-items: center; padding: 0 12px; }
.message { flex: 1; height: 32px; margin-left: 12px; background: #d7d7d7; border: 4px solid var(--frame); border-radius: 5px; }
.overview { align-self: flex-start; width: 311px; height: 44px; margin: 0 12px; padding: 14px 4px 0 5px; background: var(--frame); border-radius: 0 0 5px 5px; }
.overview svg { width: 100%; height: 30px; }
.current { width: 118px; height: 32px; margin-right: 10px; padding: 0 5px 0 6px; display: flex; align-items: center; justify-content: space-between; background: var(--frame); border-radius: 5px; font-weight: 600; }
.current span { height: 24px; background: #d0d4d6; font-size: 12px; line-height: 28px; font-weight: 500; }

/* Video output window */
.video { position: absolute; top: 0; left: 50%; right: 0; height: calc(50vh - 1px); display: grid; grid-template: 1fr 1fr / 1fr 1fr; background: #000; box-shadow: 0 3px 16px rgba(0, 0, 0, 0.8); }
.dark { background: #403e41; }
.light { background: #c8c8c8; }
.black-half { grid-column: 1 / 3; background: #000; }
```
